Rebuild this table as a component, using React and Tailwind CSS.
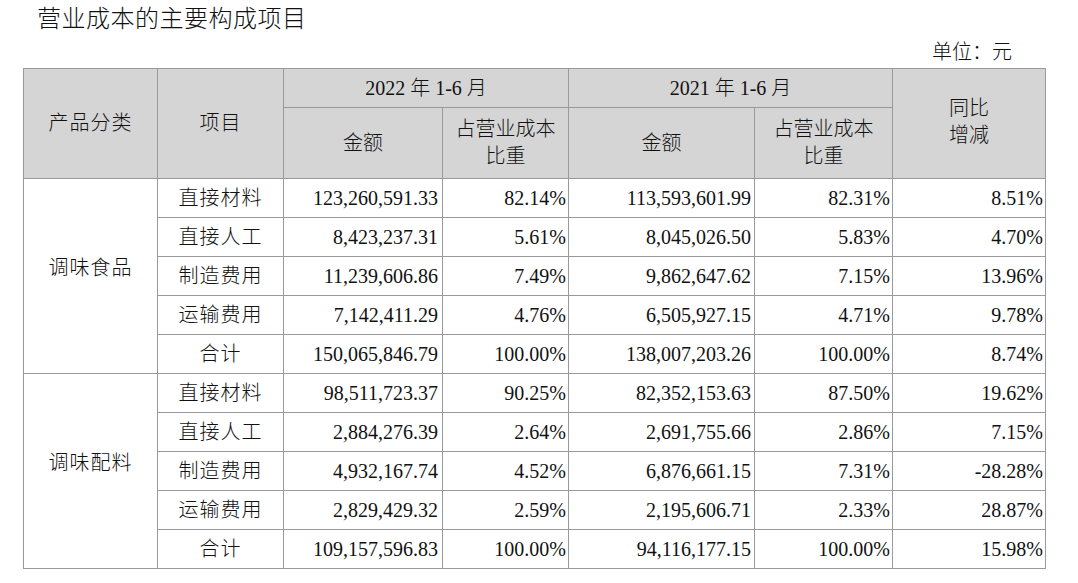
import React from "react";

const FONT = { fontFamily: '"Liberation Serif", "Noto Sans CJK SC", serif' };

const groups = [
  {
    name: "调味食品",
    rows: [
      ["直接材料", "123,260,591.33", "82.14%", "113,593,601.99", "82.31%", "8.51%"],
      ["直接人工", "8,423,237.31", "5.61%", "8,045,026.50", "5.83%", "4.70%"],
      ["制造费用", "11,239,606.86", "7.49%", "9,862,647.62", "7.15%", "13.96%"],
      ["运输费用", "7,142,411.29", "4.76%", "6,505,927.15", "4.71%", "9.78%"],
      ["合计", "150,065,846.79", "100.00%", "138,007,203.26", "100.00%", "8.74%"],
    ],
  },
  {
    name: "调味配料",
    rows: [
      ["直接材料", "98,511,723.37", "90.25%", "82,352,153.63", "87.50%", "19.62%"],
      ["直接人工", "2,884,276.39", "2.64%", "2,691,755.66", "2.86%", "7.15%"],
      ["制造费用", "4,932,167.74", "4.52%", "6,876,661.15", "7.31%", "-28.28%"],
      ["运输费用", "2,829,429.32", "2.59%", "2,195,606.71", "2.33%", "28.87%"],
      ["合计", "109,157,596.83", "100.00%", "94,116,177.15", "100.00%", "15.98%"],
    ],
  },
];

const th = "border border-[#9a9a9a] bg-[#d5d5d5] font-light text-center align-middle";
const td = "border border-[#9a9a9a] h-[39px] align-middle";

export default function App() {
  return (
    <div className="w-[1078px] h-[583px] bg-white text-[#111] font-light" style={FONT}>
      <div className="pl-[37px] pt-[4px] text-[24px] leading-[30px] tracking-[0.5px]">
        营业成本的主要构成项目
      </div>
      <div className="mt-[5px] pr-[66px] text-right text-[20px] leading-[26px]">单位：元</div>
      <table className="ml-[23px] mt-[3px] w-[1022px] table-fixed border-collapse text-[20px] leading-[27px]">
        <colgroup>
          <col className="w-[134px]" />
          <col className="w-[126px]" />
          <col className="w-[159px]" />
          <col className="w-[126px]" />
          <col className="w-[186px]" />
          <col className="w-[138px]" />
          <col className="w-[153px]" />
        </colgroup>
        <thead>
          <tr className="h-[39px]">
            <th rowSpan={2} className={th + " tracking-[1px]"}>产品分类</th>
            <th rowSpan={2} className={th + " tracking-[1px]"}>项目</th>
            <th colSpan={2} className={th}>2022 年 1-6 月</th>
            <th colSpan={2} className={th}>2021 年 1-6 月</th>
            <th rowSpan={2} className={th + " pb-[4px]"}>
              同比
              <br />
              增减
            </th>
          </tr>
          <tr className="h-[71px]">
            <th className={th}>金额</th>
            <th className={th}>
              占营业成本
              <br />
              比重
            </th>
            <th className={th}>金额</th>
            <th className={th}>
              占营业成本
              <br />
              比重
            </th>
          </tr>
        </thead>
        <tbody>
          {groups.map((g) =>
            g.rows.map((r, i) => (
              <tr key={g.name + i} className="h-[39px]">
                {i === 0 && (
                  <td rowSpan={5} className={td + " text-center tracking-[1px] pb-[16px]"}>
                    {g.name}
                  </td>
                )}
                <td className={td + " text-center tracking-[1px]"}>{r[0]}</td>
                <td className={td + " text-right pr-[4px]"}>{r[1]}</td>
                <td className={td + " text-right pr-[2px]"}>{r[2]}</td>
                <td className={td + " text-right pr-[3px]"}>{r[3]}</td>
                <td className={td + " text-right pr-[2px]"}>{r[4]}</td>
                <td className={td + " text-right pr-[2px]"}>{r[5]}</td>
              </tr>
            ))
          )}
        </tbody>
      </table>
    </div>
  );
}
